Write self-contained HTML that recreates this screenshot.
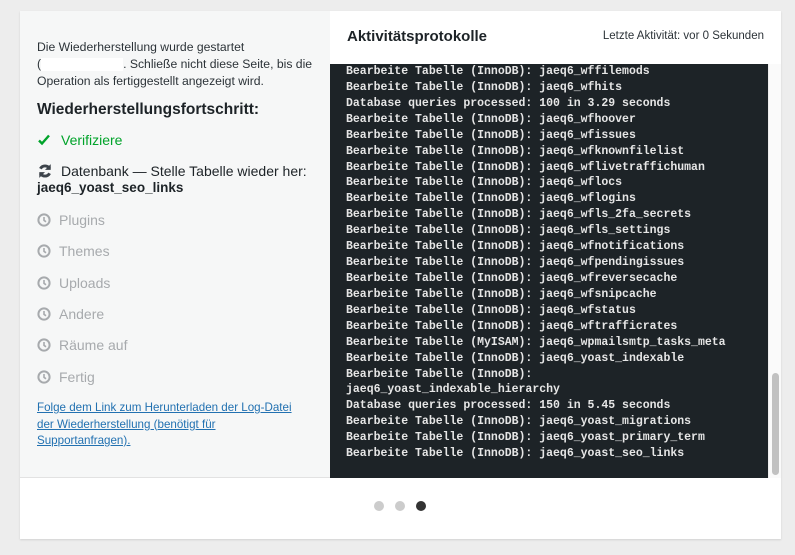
<!DOCTYPE html>
<html><head><meta charset="utf-8"><style>
*{margin:0;padding:0;box-sizing:border-box}
body{width:795px;height:555px;background:#ededed;font-family:"Liberation Sans",sans-serif;position:relative;overflow:hidden}
.card{position:absolute;left:20px;top:11px;width:761px;height:528px;background:#fff;box-shadow:0 1px 2px rgba(0,0,0,.12)}
.left{position:absolute;left:0;top:0;width:310px;height:467px;background:#f6f7f7;border-bottom:1px solid #e2e2e2}
.p{position:absolute;left:17px;top:28px;font-size:12.2px;line-height:17px;color:#2c3338;width:285px}
.blank{display:inline-block;width:82px;height:13px;background:#fff;vertical-align:middle}
h2{position:absolute;left:17px;top:90px;font-size:15.5px;font-weight:bold;color:#1d2327}
.it{position:absolute;left:17px;font-size:14px;color:#a7aaad;display:flex;align-items:center}
.it svg{margin-right:8px}
.link{position:absolute;left:17px;top:389px;font-size:11.6px;line-height:16.5px;color:#2271b1;text-decoration:underline;width:272px}
.hd{position:absolute;left:327px;top:17px;font-size:15px;font-weight:bold;color:#1d2327}
.la{position:absolute;right:17px;top:19px;font-size:11.5px;color:#2c3338}
.log{position:absolute;left:310px;top:53px;width:438px;height:414px;background:#1d2327;color:#e6e6e6;font-family:"Liberation Mono",monospace;font-size:11.5px;line-height:15.92px;padding:0 0 0 16px;white-space:pre;font-weight:bold}
.sb{position:absolute;left:748px;top:53px;width:13px;height:414px;background:#fafafa;border-left:1px solid #eee}
.th{position:absolute;left:3px;top:309px;width:7px;height:102px;background:#c1c1c1;border-radius:4px}
.dot{position:absolute;top:490px;width:10px;height:10px;border-radius:50%;background:#ccc}
</style></head><body>
<div class="card">
<div class="left">
<div class="p">Die Wiederherstellung wurde gestartet<br>(<span class="blank"></span>. Schließe nicht diese Seite, bis die Operation als fertiggestellt angezeigt wird.</div>
<h2>Wiederherstellungsfortschritt:</h2>
<div class="it" style="top:121px;color:#00a32a"><svg width="14" height="14" viewBox="0 0 14 14" style="margin-right:10px"><path d="M2 7.5l3 3 7-8" stroke="#00a32a" stroke-width="2.4" fill="none"/></svg>Verifiziere</div>
<div class="it" style="top:152px;color:#1d2327"><svg width="16" height="16" viewBox="0 0 14 14"><path d="M3 5a4.5 4.5 0 0 1 8 0M11 9a4.5 4.5 0 0 1-8 0" stroke="#3c434a" stroke-width="2.6" fill="none"/><path d="M12 1v5h-5zM2 13v-5h5z" fill="#3c434a"/></svg>Datenbank — Stelle Tabelle wieder her:</div>
<div class="it" style="top:169px;left:17px;color:#1d2327;font-weight:bold;font-size:13.5px">jaeq6_yoast_seo_links</div>
<div class="it" style="top:201px"><svg width="14" height="14" viewBox="0 0 14 14"><circle cx="7" cy="7" r="5.6" stroke="#a7aaad" stroke-width="2" fill="none"/><path d="M7 4v3.3l2 1.5" stroke="#a7aaad" stroke-width="1.6" fill="none"/></svg>Plugins</div>
<div class="it" style="top:232px"><svg width="14" height="14" viewBox="0 0 14 14"><circle cx="7" cy="7" r="5.6" stroke="#a7aaad" stroke-width="2" fill="none"/><path d="M7 4v3.3l2 1.5" stroke="#a7aaad" stroke-width="1.6" fill="none"/></svg>Themes</div>
<div class="it" style="top:264px"><svg width="14" height="14" viewBox="0 0 14 14"><circle cx="7" cy="7" r="5.6" stroke="#a7aaad" stroke-width="2" fill="none"/><path d="M7 4v3.3l2 1.5" stroke="#a7aaad" stroke-width="1.6" fill="none"/></svg>Uploads</div>
<div class="it" style="top:295px"><svg width="14" height="14" viewBox="0 0 14 14"><circle cx="7" cy="7" r="5.6" stroke="#a7aaad" stroke-width="2" fill="none"/><path d="M7 4v3.3l2 1.5" stroke="#a7aaad" stroke-width="1.6" fill="none"/></svg>Andere</div>
<div class="it" style="top:326px"><svg width="14" height="14" viewBox="0 0 14 14"><circle cx="7" cy="7" r="5.6" stroke="#a7aaad" stroke-width="2" fill="none"/><path d="M7 4v3.3l2 1.5" stroke="#a7aaad" stroke-width="1.6" fill="none"/></svg>Räume auf</div>
<div class="it" style="top:358px"><svg width="14" height="14" viewBox="0 0 14 14"><circle cx="7" cy="7" r="5.6" stroke="#a7aaad" stroke-width="2" fill="none"/><path d="M7 4v3.3l2 1.5" stroke="#a7aaad" stroke-width="1.6" fill="none"/></svg>Fertig</div>
<div class="link">Folge dem Link zum Herunterladen der Log-Datei der Wiederherstellung (benötigt für Supportanfragen).</div>
</div>
<div class="hd">Aktivitätsprotokolle</div>
<div class="la">Letzte Aktivität: vor 0 Sekunden</div>
<div class="log">Bearbeite Tabelle (InnoDB): jaeq6_wffilemods
Bearbeite Tabelle (InnoDB): jaeq6_wfhits
Database queries processed: 100 in 3.29 seconds
Bearbeite Tabelle (InnoDB): jaeq6_wfhoover
Bearbeite Tabelle (InnoDB): jaeq6_wfissues
Bearbeite Tabelle (InnoDB): jaeq6_wfknownfilelist
Bearbeite Tabelle (InnoDB): jaeq6_wflivetraffichuman
Bearbeite Tabelle (InnoDB): jaeq6_wflocs
Bearbeite Tabelle (InnoDB): jaeq6_wflogins
Bearbeite Tabelle (InnoDB): jaeq6_wfls_2fa_secrets
Bearbeite Tabelle (InnoDB): jaeq6_wfls_settings
Bearbeite Tabelle (InnoDB): jaeq6_wfnotifications
Bearbeite Tabelle (InnoDB): jaeq6_wfpendingissues
Bearbeite Tabelle (InnoDB): jaeq6_wfreversecache
Bearbeite Tabelle (InnoDB): jaeq6_wfsnipcache
Bearbeite Tabelle (InnoDB): jaeq6_wfstatus
Bearbeite Tabelle (InnoDB): jaeq6_wftrafficrates
Bearbeite Tabelle (MyISAM): jaeq6_wpmailsmtp_tasks_meta
Bearbeite Tabelle (InnoDB): jaeq6_yoast_indexable
Bearbeite Tabelle (InnoDB):
jaeq6_yoast_indexable_hierarchy
Database queries processed: 150 in 5.45 seconds
Bearbeite Tabelle (InnoDB): jaeq6_yoast_migrations
Bearbeite Tabelle (InnoDB): jaeq6_yoast_primary_term
Bearbeite Tabelle (InnoDB): jaeq6_yoast_seo_links</div>
<div class="sb"><div class="th"></div></div>
<div class="dot" style="left:354px"></div>
<div class="dot" style="left:375px"></div>
<div class="dot" style="left:396px;background:#333"></div>
</div>
</body></html>
